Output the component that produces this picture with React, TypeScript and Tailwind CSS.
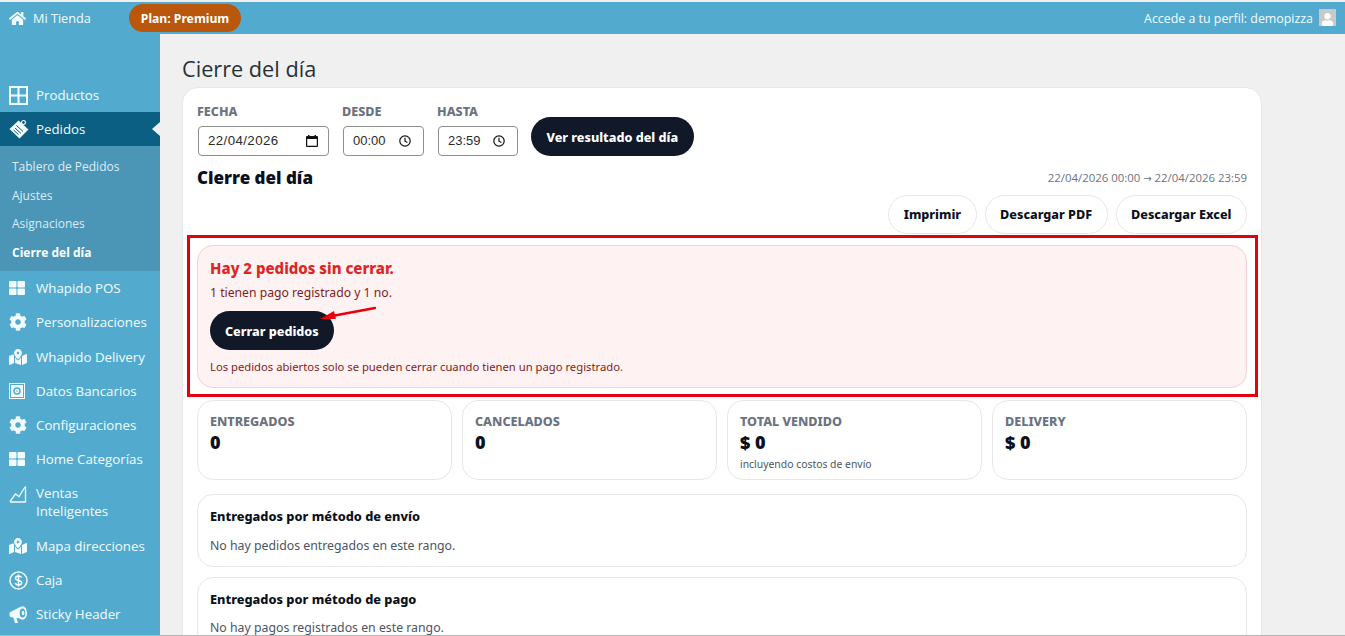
import React from 'react';
import { FaHome, FaThLarge, FaCog, FaMapMarkedAlt, FaUser } from 'react-icons/fa';

const ProductosIcon = () => (
  <svg width="19" height="19" viewBox="0 0 19 19" fill="none" stroke="#f2fbff" strokeWidth="2">
    <rect x="1" y="1" width="17" height="17" />
    <path d="M9.5 1v17M1 9.5h17" />
  </svg>
);

const PedidosIcon = () => (
  <svg width="20" height="20" viewBox="0 0 20 20">
    <path d="M0.5 10 L9.5 1.5 L19.5 10.5 L10.5 19.5 Z" fill="#f2fbff" />
    <path d="M7.5 6.5 L14 12.5 M6 9 L12 14.5 M4.5 11 L9.5 15.5" stroke="#0b5f82" strokeWidth="1" />
    <circle cx="14.5" cy="3.5" r="2" fill="none" stroke="#f2fbff" strokeWidth="1.2" />
  </svg>
);

const BancoIcon = () => (
  <svg width="16" height="16" viewBox="0 0 16 16" fill="none" stroke="#f2fbff">
    <rect x="0.5" y="0.5" width="15" height="15" strokeWidth="1" />
    <rect x="2.5" y="2.5" width="11" height="11" fill="#f2fbff" strokeWidth="1" />
    <circle cx="8" cy="8" r="3" stroke="#52abce" strokeWidth="1.5" />
    <circle cx="8" cy="8" r="0.8" fill="#52abce" stroke="none" />
  </svg>
);

const VentasIcon = () => (
  <svg width="18" height="18" viewBox="0 0 18 18" fill="none" stroke="#f2fbff" strokeWidth="1.3">
    <path d="M1 17 H16.5 V1.5" />
    <path d="M1 16.5 L6.5 9 L10 11.5 L16 2" />
  </svg>
);

const CajaIcon = () => (
  <svg width="19" height="19" viewBox="0 0 19 19" fill="none" stroke="#f2fbff">
    <circle cx="9.5" cy="9.5" r="8.5" strokeWidth="1.5" />
    <path d="M12.6 6.6 C12 5.4 10.8 5 9.5 5 C7.8 5 6.5 5.9 6.5 7.2 C6.5 10.2 12.7 8.6 12.7 11.7 C12.7 13.1 11.3 14 9.5 14 C8 14 6.8 13.4 6.2 12.2 M9.5 3.4 V15.6" strokeWidth="1.5" />
  </svg>
);

const MegafonoIcon = () => (
  <svg width="19" height="19" viewBox="0 0 19 19">
    <path d="M0.5 8.5 C0.5 7.6 1.2 7 2 6.8 L11 2 L15 14 L7.5 13 L9 18 H6 L4.3 12.6 L2.5 12.2 C1.2 12 0.5 11.2 0.5 10 Z" fill="#f2fbff" />
    <ellipse cx="13.5" cy="8" rx="4.5" ry="6.7" fill="#f2fbff" />
    <ellipse cx="13.5" cy="8" rx="2.8" ry="4.6" fill="#52abce" />
    <ellipse cx="14" cy="8" rx="1.3" ry="2.2" fill="#f2fbff" />
  </svg>
);

const CalendarIcon = () => (
  <svg width="12" height="12" viewBox="0 0 12 12" fill="#111">
    <path d="M2 0h1.5v1h5V0H10v1h1a1 1 0 0 1 1 1v9a1 1 0 0 1-1 1H1a1 1 0 0 1-1-1V2a1 1 0 0 1 1-1h1zM1.2 4v6.8h9.6V4z" />
  </svg>
);

const ClockIcon = () => (
  <svg width="12" height="12" viewBox="0 0 12 12" fill="none" stroke="#111" strokeWidth="1.2">
    <circle cx="6" cy="6" r="5.2" />
    <path d="M6 2.8V6.2L8.4 7.6" />
  </svg>
);

const menuBottom = [
  { label: 'Whapido POS', icon: <FaThLarge size={16} />, h: 'h-[34px]' },
  { label: 'Personalizaciones', icon: <FaCog size={18} />, h: 'h-[34px]' },
  { label: 'Whapido Delivery', icon: <FaMapMarkedAlt size={18} />, h: 'h-[35px]' },
  { label: 'Datos Bancarios', icon: <BancoIcon />, h: 'h-[34px]' },
  { label: 'Configuraciones', icon: <FaCog size={18} />, h: 'h-[34px]' },
  { label: 'Home Categorías', icon: <FaThLarge size={16} />, h: 'h-[34px]' },
];

const menuEnd = [
  { label: 'Mapa direcciones', icon: <FaMapMarkedAlt size={18} />, h: 'h-[34px]' },
  { label: 'Caja', icon: <CajaIcon />, h: 'h-[34px]' },
  { label: 'Sticky Header', icon: <MegafonoIcon />, h: 'h-[34px]' },
];

const subItems = ['Tablero de Pedidos', 'Ajustes', 'Asignaciones', 'Cierre del día'];

const MenuItem = ({ label, icon, h }: { label: string; icon: React.ReactNode; h: string }) => (
  <div className={`flex items-center ${h} pl-[9px]`}>
    <span className="w-[27px] flex items-center text-[#f2fbff]">{icon}</span>
    <span className="text-[13.3px] pt-[2px] text-[#f2fbff]">{label}</span>
  </div>
);

const stats = [
  { label: 'ENTREGADOS', value: '0', note: '' },
  { label: 'CANCELADOS', value: '0', note: '' },
  { label: 'TOTAL VENDIDO', value: '$ 0', note: 'incluyendo costos de envío' },
  { label: 'DELIVERY', value: '$ 0', note: '' },
];

const DateField = ({ label, value, icon, width, spaced }: { label: string; value: string; icon: React.ReactNode; width: string; spaced?: boolean }) => (
  <div className={`${width} flex flex-col`}>
    <span className="text-[12.6px] leading-[16px] font-extrabold text-[#6b7280]">{label}</span>
    <div className={`mt-[6px] ml-px h-[30px] flex items-center justify-between pl-[9px] bg-white border border-[#8f8f8f] rounded-[4px] text-[#2b2b2b] font-['Liberation_Sans',sans-serif] ${spaced ? 'pr-[10px] text-[13.3px] tracking-[0.4px]' : 'pr-[12px] text-[13px]'}`}>
      <span>{value}</span>
      {icon}
    </div>
  </div>
);

export default function App() {
  return (
    <div className="h-[636px] w-[1345px] overflow-hidden bg-[#f0f0f0] font-['Noto_Sans',sans-serif] pt-[2px] border-b border-[#b5b5b5]">
      {/* barra superior */}
      <header className="h-[32px] bg-[#52abce] flex items-center justify-between pl-[9px] pr-[9px] font-['Open_Sans',sans-serif] text-[#f2fbff]">
        <div className="flex items-center">
          <span className="w-[24px] flex items-center"><FaHome size={17} /></span>
          <span className="text-[12.7px] pt-[2px]">Mi Tienda</span>
          <span className="ml-[38px] h-[28px] px-[12px] pt-[2px] flex items-center rounded-full bg-[#b9570c] text-white font-bold text-[12.2px] font-['Noto_Sans',sans-serif]">Plan: Premium</span>
        </div>
        <div className="flex items-center gap-[6px]">
          <span className="text-[12.4px] pt-[2px]">Accede a tu perfil: demopizza</span>
          <span className="w-[17px] h-[17px] bg-[#c9c9c9] flex items-end justify-center overflow-hidden">
            <FaUser size={13} className="text-white" />
          </span>
        </div>
      </header>

      <div className="flex h-[601px]">
        {/* menu lateral */}
        <aside className="w-[160px] shrink-0 bg-[#52abce] font-['Open_Sans',sans-serif] pt-[44px]">
          <MenuItem label="Productos" icon={<ProductosIcon />} h="h-[34px]" />
          <div className="relative h-[34px] bg-[#0b5f82]">
            <MenuItem label="Pedidos" icon={<PedidosIcon />} h="h-[34px]" />
            <span className="absolute right-0 top-[10px] w-0 h-0 border-y-[7px] border-y-transparent border-r-[8px] border-r-[#f0f0f0]" />
          </div>
          <div className="h-[125px] bg-[#4b95b7] pt-[11px] pl-[12px] flex flex-col text-[12px] text-[#dcedf5]">
            {subItems.map((s, i) => (
              <span key={s} className={`h-[28.5px] leading-[20px] ${i === 3 ? 'font-bold text-white' : ''}`}>{s}</span>
            ))}
          </div>
          {menuBottom.map((m) => (
            <MenuItem key={m.label} {...m} />
          ))}
          <div className="flex pl-[9px] h-[53px] pt-[8px]">
            <span className="w-[27px] pt-[1px]"><VentasIcon /></span>
            <span className="text-[13.3px] leading-[18px] text-[#f2fbff]">Ventas<br />Inteligentes</span>
          </div>
          {menuEnd.map((m) => (
            <MenuItem key={m.label} {...m} />
          ))}
        </aside>

        {/* contenido */}
        <main className="flex-1 pl-[22px] pr-[84px] overflow-hidden">
          <h1 className="mt-[19px] text-[21.7px] leading-[32px] font-normal text-[#263238] font-['Open_Sans',sans-serif]">Cierre del día</h1>
          <div className="relative mt-[2px] w-[1080px] bg-white border border-[#e7e7e7] rounded-[16px] pt-[16px] px-[14px] pb-[14px]">
            <div className="flex items-end gap-[13px]">
              <DateField label="FECHA" value="22/04/2026" icon={<CalendarIcon />} width="w-[132px]" spaced />
              <DateField label="DESDE" value="00:00" icon={<ClockIcon />} width="w-[82px]" />
              <DateField label="HASTA" value="23:59" icon={<ClockIcon />} width="w-[81px]" />
              <button className="h-[39px] px-[15.5px] pt-[4px] rounded-full bg-[#111827] text-white text-[12.6px] font-extrabold">Ver resultado del día</button>
            </div>

            <div className="mt-[8px] flex items-center justify-between">
              <h2 className="text-[17px] leading-[28px] font-black text-[#0b1020]">Cierre del día</h2>
              <span className="text-[11.4px] text-[#6b7280] font-['Open_Sans',sans-serif]">22/04/2026 00:00 <span className="font-['DejaVu_Sans',sans-serif] text-[10px]">→</span> 22/04/2026 23:59</span>
            </div>

            <div className="mt-[3px] flex justify-end gap-[8px]">
              {['Imprimir', 'Descargar PDF', 'Descargar Excel'].map((b) => (
                <button key={b} className="h-[39px] px-[14.5px] pt-[2px] rounded-full bg-white border border-[#e5e7eb] text-[12.6px] font-extrabold text-[#0b1020]">{b}</button>
              ))}
            </div>

            {/* alerta */}
            <div className="relative mt-[11px] h-[143px] bg-[#fef2f2] border border-[#f6d0d3] rounded-[16px] px-[12px] pt-[11px]">
              <div className="text-[15px] leading-[22px] font-extrabold text-[#dc2626]">Hay 2 pedidos sin cerrar.</div>
              <div className="mt-[5px] text-[12.2px] leading-[18px] text-[#7f1d1d]">1 tienen pago registrado y 1 no.</div>
              <button className="mt-[9px] h-[39px] px-[15px] pt-[4px] rounded-full bg-[#111827] text-white text-[12.6px] font-extrabold">Cerrar pedidos</button>
              <div className="mt-[9px] text-[11.25px] leading-[16px] text-[#7f1d1d]">Los pedidos abiertos solo se pueden cerrar cuando tienen un pago registrado.</div>
              <svg className="absolute left-[122px] top-[60px]" width="56" height="18" viewBox="0 0 56 18">
                <path d="M55 2 L12 10" stroke="#e8000d" strokeWidth="2.4" strokeLinecap="round" />
                <path d="M0 13 L14 5 L16 13 Z" fill="#e8000d" />
              </svg>
              {/* marco rojo de la captura */}
              <div className="absolute left-[-11px] right-[-12px] top-[-11px] bottom-[-10px] border-[3px] border-[#e3000f] pointer-events-none" />
            </div>

            <div className="mt-[12px] grid grid-cols-4 gap-[10px]">
              {stats.map((s) => (
                <div key={s.label} className="h-[80px] bg-white border border-[#e5e7eb] rounded-[16px] px-[12px] pt-[13px]">
                  <div className="text-[12.6px] leading-[16px] font-extrabold text-[#6b7280]">{s.label}</div>
                  <div className="mt-[1px] text-[18px] leading-[22px] font-black text-[#0b1020]">{s.value}</div>
                  {s.note && <div className="mt-[4px] text-[10.4px] leading-[14px] text-[#4b5563]">{s.note}</div>}
                </div>
              ))}
            </div>

            <div className="mt-[14px] h-[73px] border border-[#e5e7eb] rounded-[16px] px-[12px] pt-[12px]">
              <div className="text-[12.75px] leading-[18px] font-extrabold text-[#0b1020]">Entregados por método de envío</div>
              <div className="mt-[12px] text-[12.3px] leading-[18px] text-[#4b5563]">No hay pedidos entregados en este rango.</div>
            </div>

            <div className="mt-[10px] h-[73px] border border-[#e5e7eb] rounded-[16px] px-[12px] pt-[12px]">
              <div className="text-[12.75px] leading-[18px] font-extrabold text-[#0b1020]">Entregados por método de pago</div>
              <div className="mt-[12px] text-[12.3px] leading-[16px] text-[#4b5563]">No hay pagos registrados en este rango.</div>
            </div>
          </div>
        </main>
      </div>
    </div>
  );
}
